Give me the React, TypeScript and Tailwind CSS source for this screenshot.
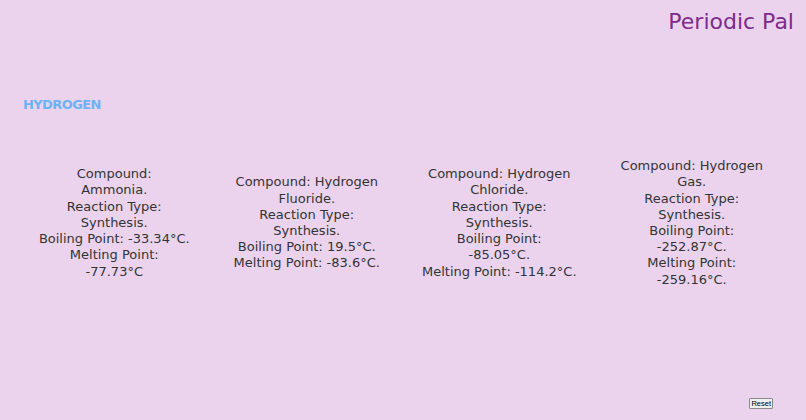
import React from 'react';

const compounds = [
  {
    lines: ['Compound:', 'Ammonia.', 'Reaction Type:', 'Synthesis.', 'Boiling Point: -33.34°C.', 'Melting Point:', '-77.73°C'],
  },
  {
    lines: ['Compound: Hydrogen', 'Fluoride.', 'Reaction Type:', 'Synthesis.', 'Boiling Point: 19.5°C.', 'Melting Point: -83.6°C.'],
  },
  {
    lines: ['Compound: Hydrogen', 'Chloride.', 'Reaction Type:', 'Synthesis.', 'Boiling Point:', '-85.05°C.', 'Melting Point: -114.2°C.'],
  },
  {
    lines: ['Compound: Hydrogen', 'Gas.', 'Reaction Type:', 'Synthesis.', 'Boiling Point:', '-252.87°C.', 'Melting Point:', '-259.16°C.'],
  },
];

export default function App() {
  return (
    <div
      className="flex h-[420px] w-full flex-col bg-[#ebd3ee] text-[#333333]"
      style={{ fontFamily: '"DejaVu Sans", "Noto Sans", sans-serif' }}
    >
      {/* Header */}
      <div className="flex justify-end pr-[12px] pt-[8px]">
        <h1 className="text-[22px] leading-[27px] text-[#7d2a8c]">Periodic Pal</h1>
      </div>

      {/* Element name */}
      <h2 className="mt-[62px] pl-[23px] text-[13px] font-bold leading-[16px] tracking-[-0.6px] text-[#6bb3f2]">
        HYDROGEN
      </h2>

      {/* Compound cards */}
      <div className="mt-[13px] grid h-[194px] grid-cols-4 items-center px-[18px]">
        {compounds.map((c, i) => (
          <div key={i} className="flex flex-col items-center text-center text-[13px] leading-[16.2px]">
            {c.lines.map((l, j) => (
              <p key={j} className="whitespace-nowrap">
                {l}
              </p>
            ))}
          </div>
        ))}
      </div>

      {/* Footer */}
      <div className="mt-auto flex justify-end pb-[11px] pr-[33px]">
        <button
          className="rounded-[1px] border border-[#8a8a8a] bg-[#efefef] px-[1px] text-[7.5px] leading-[9px] text-black"
          style={{ fontFamily: '"Liberation Sans", Arial, sans-serif' }}
        >
          Reset
        </button>
      </div>
    </div>
  );
}
